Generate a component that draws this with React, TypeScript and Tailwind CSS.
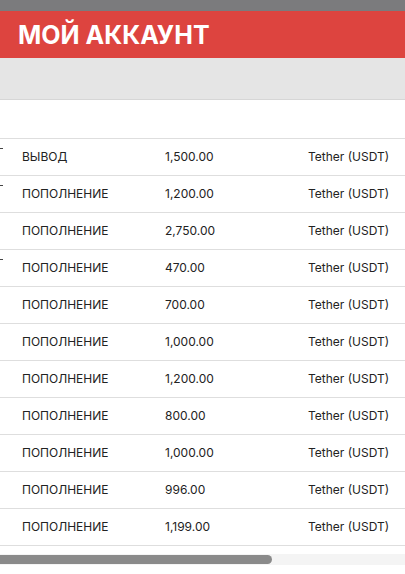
import React from "react";

type Row = { type: string; amount: string; mark?: boolean };

const rows: Row[] = [
  { type: "ВЫВОД", amount: "1,500.00", mark: true },
  { type: "ПОПОЛНЕНИЕ", amount: "1,200.00", mark: true },
  { type: "ПОПОЛНЕНИЕ", amount: "2,750.00" },
  { type: "ПОПОЛНЕНИЕ", amount: "470.00", mark: true },
  { type: "ПОПОЛНЕНИЕ", amount: "700.00" },
  { type: "ПОПОЛНЕНИЕ", amount: "1,000.00" },
  { type: "ПОПОЛНЕНИЕ", amount: "1,200.00" },
  { type: "ПОПОЛНЕНИЕ", amount: "800.00" },
  { type: "ПОПОЛНЕНИЕ", amount: "1,000.00" },
  { type: "ПОПОЛНЕНИЕ", amount: "996.00" },
  { type: "ПОПОЛНЕНИЕ", amount: "1,199.00" },
];

const App: React.FC = () => {
  return (
    <div className="min-h-[574px] w-[405px] bg-white overflow-hidden" style={{ fontFamily: "Inter, 'Noto Sans', sans-serif" }}>
      <div className="h-[11px] bg-[#7b7b7d]" />
      <div className="h-[47px] bg-[#dd443f] flex items-center pl-[18px] pt-[2px]">
        <h1 className="text-[25px] font-bold text-white leading-none tracking-[0px]">МОЙ АККАУНТ</h1>
      </div>
      <div className="h-[42px] bg-[#e5e5e5] border-b border-[#d6d6d6]" />
      <div className="h-[39px] border-b border-[#dedede]" />

      {/* transactions, scrolled sideways */}
      <div className="text-[12px] text-[#222]">
        {rows.map((r, i) => (
          <div key={i} className="h-[37px] border-b border-[#dedede] flex items-center relative">
            {r.mark && <span className="absolute left-0 top-[9px] w-[3px] h-[2px] border-t border-[#444]" />}
            <span className="w-[165px] pl-[22px]">{r.type}</span>
            <span className="w-[143px]">{r.amount}</span>
            <span>Tether (USDT)</span>
          </div>
        ))}
      </div>

      <div className="mt-[8px] h-[11px] bg-[#f4f4f4] flex items-center">
        <div className="h-[9px] w-[272px] bg-[#8a8a8a] rounded-r-full" />
      </div>
    </div>
  );
};

export default App;
